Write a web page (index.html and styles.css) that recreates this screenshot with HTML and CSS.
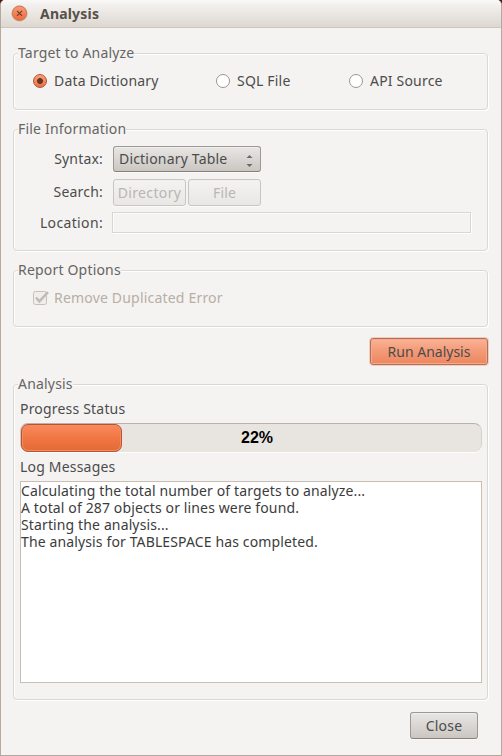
FILE: index.html
```html
<!DOCTYPE html>
<html lang="en">
<head>
<meta charset="utf-8">
<title>Analysis</title>
<link rel="stylesheet" href="styles.css">
</head>
<body>
<div class="window">
  <header class="titlebar">
    <svg class="close-icon" width="17" height="17" viewBox="0 0 17 17">
      <defs><linearGradient id="orb" x1="0" y1="0" x2="0" y2="1"><stop offset="0" stop-color="#f79a78"/><stop offset="1" stop-color="#ee6a3c"/></linearGradient></defs>
      <circle cx="8.5" cy="8.5" r="8.2" fill="#cfc5bb"/>
      <circle cx="8.5" cy="8.3" r="7.2" fill="url(#orb)" stroke="#c9724f" stroke-width=".8"/>
      <path d="M6 5.8l5 5M11 5.8l-5 5" stroke="#6d3a27" stroke-width="1.1"/>
    </svg>
    <h1 class="title">Analysis</h1>
  </header>
  <main class="content">
    <section class="group group-target">
      <h2 class="legend">Target to Analyze</h2>
      <div class="radios">
        <label class="choice"><span class="radio radio-on"></span><span>Data Dictionary</span></label>
        <label class="choice"><span class="radio"></span><span>SQL File</span></label>
        <label class="choice"><span class="radio"></span><span>API Source</span></label>
      </div>
    </section>

    <section class="group group-file">
      <h2 class="legend">File Information</h2>
      <div class="form">
        <span class="label">Syntax:</span>
        <div class="button select"><span>Dictionary Table</span>
          <svg width="7" height="14" viewBox="0 0 7 14"><path d="M.5 4L3.5 1l3 3zM.5 10h6l-3 3z" fill="#6c6b69"/></svg>
        </div>
        <span class="label label-raised">Search:</span>
        <div class="pair">
          <div class="button disabled"><span class="wide">Directory</span></div>
          <div class="button disabled"><span>File</span></div>
        </div>
        <span class="label label-raised wide">Location:</span>
        <div class="field"></div>
      </div>
    </section>

    <section class="group group-report">
      <h2 class="legend">Report Options</h2>
      <label class="choice choice-disabled">
        <svg class="check" width="17" height="16" viewBox="0 0 17 16">
          <rect x=".5" y="1.5" width="13" height="13" rx="2" fill="#f0eeec" stroke="#c9c0b7"/>
          <path d="M3 7.5l3.4 3.8L15 2.2" fill="none" stroke="#c3bab1" stroke-width="2.5"/>
        </svg>
        <span>Remove Duplicated Error</span>
      </label>
    </section>

    <div class="button run"><span>Run Analysis</span></div>

    <section class="group group-analysis">
      <h2 class="legend">Analysis</h2>
      <div class="caption caption-progress"><span>Progress Status</span></div>
      <div class="progress"><div class="fill"></div><span class="percent">22%</span></div>
      <div class="caption caption-log"><span>Log Messages</span></div>
      <div class="log">
        <p>Calculating the total number of targets to analyze...</p>
        <p>A total of 287 objects or lines were found.</p>
        <p>Starting the analysis...</p>
        <p>The analysis for TABLESPACE has completed.</p>
      </div>
    </section>

    <div class="button close"><span>Close</span></div>
  </main>
</div>
</body>
</html>
```

FILE: styles.css
```css
* { box-sizing: border-box; }
body {
  margin: 0;
  background: #4a1a12;
  font: 14px/18px "Noto Sans", "Open Sans", sans-serif;
  letter-spacing: 0.19px;
  color: #4c4c4c;
}
h1, h2, p { margin: 0; font-size: inherit; font-weight: normal; }
span, h1, h2, p { white-space: nowrap; }

.window {
  width: 502px;
  height: 756px;
  border: 1px solid #b5a99d;
  border-top: 0;
  border-radius: 5px 5px 0 0;
  background: #f4f3f1;
  overflow: hidden;
}
.titlebar {
  display: flex;
  align-items: center;
  gap: 12px;
  height: 28px;
  padding-left: 10px;
  background: linear-gradient(#faf9f8, #f2f0ed 20%, #ddd7d0);
  border-bottom: 1px solid #cfc5bb;
}
.title { font-weight: bold; color: #57504a; }

.content { display: flex; flex-direction: column; padding: 25px 13px 0 12px; }
.group {
  border: 1px solid #dad8d4;
  border-radius: 4px;
  box-shadow: 1px 1px 0 #fff, inset 1px 1px 0 #fff;
}
.legend {
  width: fit-content;
  height: 18px;
  margin: -10px 0 0 4px;
  background: #f4f3f1;
  color: #666563;
}
.group-target { height: 57px; }
.group-file { height: 122px; margin-top: 19px; }
.group-report { height: 57px; margin-top: 19px; }
.group-analysis { height: 316px; margin-top: 18px; padding: 0 5px 0 6px; }
.group-analysis .legend { margin-left: -2px; }

.radios { display: grid; grid-template-columns: 183px 133px auto; padding: 10px 0 0 19px; }
.choice { display: flex; align-items: center; gap: 7px; }
.choice-disabled { gap: 4px; padding: 10px 0 0 19px; color: #b8aea5; }
.radio {
  width: 14px;
  height: 14px;
  border: 1px solid #9f958c;
  border-radius: 50%;
  background: #fff;
}
.radio-on {
  border-color: #b65330;
  background: radial-gradient(circle, #6c3520 0 2.6px, transparent 3.3px), linear-gradient(#f8a17e, #ec6f43);
}

.form {
  display: grid;
  grid-template-columns: 89px 1fr;
  grid-template-rows: 26px 27px 21px;
  row-gap: 7px;
  column-gap: 10px;
  padding: 8px 16px 0 0;
  align-items: center;
}
.label { text-align: right; }
.label-raised { margin-bottom: 2px; }
.button {
  display: flex;
  align-items: center;
  justify-content: center;
  border: 1px solid #9c9894;
  border-bottom-color: #85807c;
  border-radius: 3px;
  background: linear-gradient(#e8e6e4, #d9d6d3 50%, #cbc6c2);
  box-shadow: inset 0 1px 0 #f0efed, 0 1px 0 #fafaf9;
}
.select { width: 148px; height: 26px; justify-content: space-between; padding: 0 7px 0 5px; }
.select svg { margin-top: 3px; }
.pair { display: flex; gap: 2px; }
.pair .button { width: 73px; height: 27px; }
.wide { letter-spacing: 0.35px; }
.disabled { border-color: #c8c5c2; background: linear-gradient(#f4f3f2, #e8e7e5); color: #b9b5b2; }
.field {
  height: 21px;
  margin: -1px 0 1px -1px;
  border: 1px solid #d9d5cf;
  box-shadow: inset 1px 1px 0 #fbfbfa, 1px 1px 0 #fff;
}
.run {
  align-self: flex-end;
  width: 118px;
  height: 27px;
  margin: 11px 0 1px;
  letter-spacing: 0;
  border-color: #b07059;
  background: linear-gradient(#fab496, #f49b79 45%, #ec875f);
  box-shadow: inset 0 0 0 1px #f8a98a, 0 0 0 1px #f0cfc2;
}
.close { align-self: flex-end; width: 68px; height: 27px; margin: 12px 10px 0 0; }

.caption { display: flex; height: 30px; align-items: center; }
.caption-progress { padding-top: 2px; }
.caption-log { height: 29px; padding-top: 1px; }
.progress {
  display: grid;
  height: 29px;
  border-top: 1px solid #bdb2a7;
  border-left: 1px solid #d0c8c0;
  border-right: 1px solid #d8d2cb;
  border-radius: 8px;
  background: #e8e5e1;
  box-shadow: 0 1px 0 #fff;
}
.fill {
  grid-area: 1 / 1;
  width: 101px;
  height: 28px;
  border: 1px solid #b9542f;
  border-radius: 7px;
  background: linear-gradient(#f98a5f, #f07743 50%, #e26a37);
  box-shadow: inset 0 0 0 1px #f58b62;
}
.percent {
  grid-area: 1 / 1;
  place-self: center;
  padding-left: 12px;
  font: bold 16px/18px "Liberation Sans", sans-serif;
  letter-spacing: 0;
  color: #000;
}
.log {
  height: 202px;
  border: 1px solid #c9beb3;
  background: #fff;
  line-height: 17px;
  letter-spacing: 0.13px;
  color: #3c3c3c;
}
```
